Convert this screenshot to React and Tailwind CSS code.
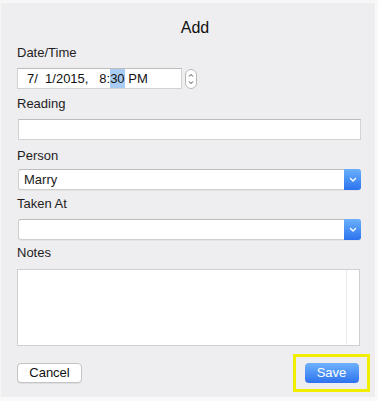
import React from "react";

function Chevron() {
  return (
    <svg width="8" height="6" viewBox="0 0 8 6" fill="none">
      <path d="M1.5 1.5 L4 4 L6.5 1.5" stroke="white" strokeWidth="1.4" strokeLinecap="round" strokeLinejoin="round" />
    </svg>
  );
}

function Select({ value }) {
  return (
    <div className="flex h-[21px] w-[343px] ml-[1px] rounded-[3px] border border-[#cfcfcf] border-t-[#bdbdbd] bg-white shadow-[0_1px_0_rgba(0,0,0,0.04)]">
      <div className="flex-1 pl-[5px] text-[13px] leading-[19px] text-[#222]">{value}</div>
      <div className="flex w-[17px] items-center justify-center rounded-r-[3px] bg-gradient-to-b from-[#6bb0fb] to-[#2c72ee] -my-[1px] -mr-[1px]">
        <Chevron />
      </div>
    </div>
  );
}

function Label({ children, className }) {
  return <div className={"h-4 text-[13px] leading-4 text-[#1e1e1e] " + className}>{children}</div>;
}

export default function App() {
  return (
    <div
      className="flex h-[401px] w-[378px] flex-col border-t-[3px] border-l border-r-[3px] border-b-[4px] border-t-[#f7f7f7] border-l-[#f7f7f7] border-r-[#f9f9f9] border-b-[#f9f9f9] bg-[#eeedef] pl-[16px]"
      style={{ fontFamily: '"Liberation Sans", Arial, sans-serif' }}
    >
      <div className="mt-[16px] h-[18px] pr-[2px] text-center text-[16px] leading-[18px] text-[#111]">Add</div>

      <Label className="mt-[8px]">Date/Time</Label>
      <div className="mt-[7px] flex items-center">
        <div className="flex h-[21px] w-[165px] items-center border border-[#d2d2d2] border-t-[#bcbcbc] bg-white pl-[9px] text-[13px] text-[#111] whitespace-pre">
          {"7/  1/2015,   8:"}
          <span className="bg-[#a8ccf4]">30</span>
          {" PM"}
        </div>
        <div className="ml-[3px] flex h-[20px] w-[12px] flex-col items-center justify-center rounded-[6px] border border-[#b9b9b9] bg-white text-[#444]">
          <svg width="6" height="14" viewBox="0 0 6 14" fill="none">
            <path d="M1 4.5 L3 2.5 L5 4.5" stroke="#444" strokeWidth="1" />
            <path d="M1 9.5 L3 11.5 L5 9.5" stroke="#444" strokeWidth="1" />
          </svg>
        </div>
      </div>

      <Label className="mt-[7px]">Reading</Label>
      <div className="mt-[7px] h-[21px] w-[343px] ml-[1px] border border-[#d2d2d2] border-t-[#bcbcbc] bg-white" />

      <Label className="mt-[8px]">Person</Label>
      <div className="mt-[5px]">
        <Select value="Marry" />
      </div>

      <Label className="mt-[6px]">Taken At</Label>
      <div className="mt-[7px]">
        <Select value="" />
      </div>

      <Label className="mt-[5px]">Notes</Label>
      <div className="mt-[8px] flex h-[77px] w-[343px] justify-end border border-[#cfcfcf] bg-white">
        <div className="mr-[12px] w-px bg-[#ececec]" />
      </div>

      <div className="mt-[8px] flex items-center justify-between pr-[5px]">
        <div className="flex h-[20px] w-[65px] items-center justify-center rounded-[4px] border border-[#c4c4c4] bg-white text-[13px] text-[#111] shadow-[0_1px_0_rgba(0,0,0,0.06)]">
          Cancel
        </div>
        <div className="flex h-[38px] w-[77px] items-center justify-center border-[3px] border-[#f1ee00]">
          <div className="flex h-[20px] w-[54px] items-center justify-center rounded-[4px] bg-gradient-to-b from-[#6fb2fb] to-[#2e71ef] text-[13px] text-white">
            Save
          </div>
        </div>
      </div>
    </div>
  );
}
